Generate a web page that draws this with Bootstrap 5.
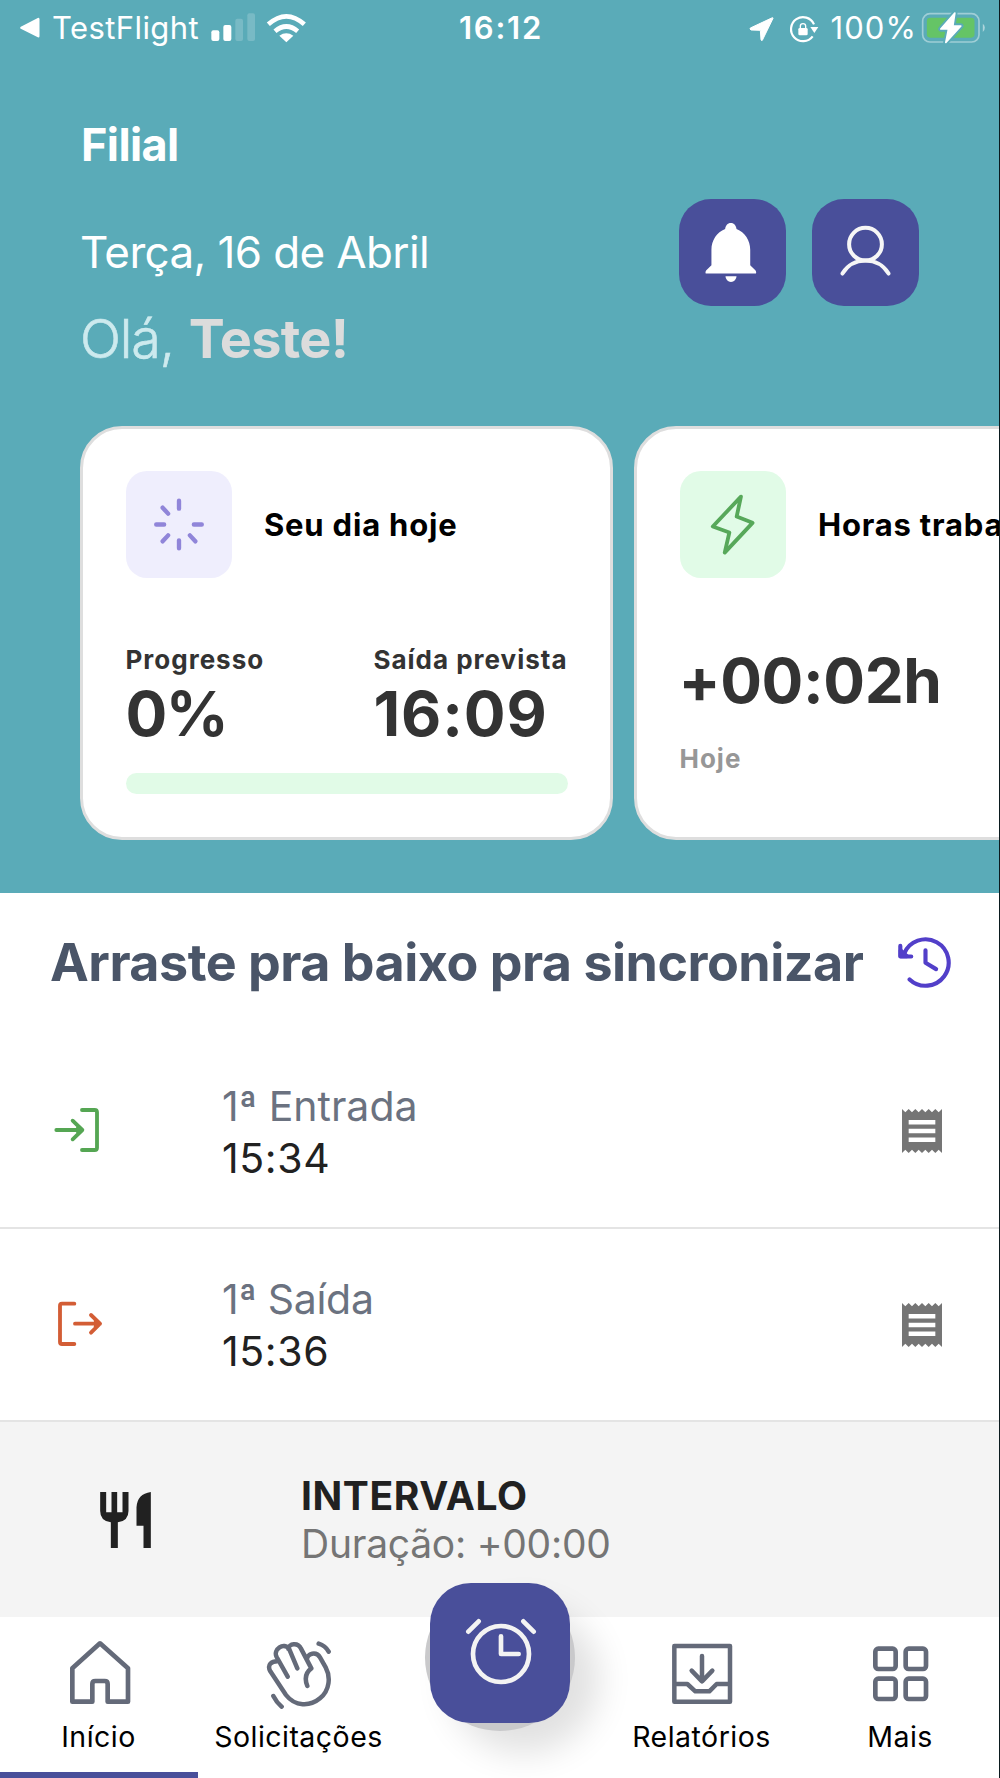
<!DOCTYPE html>
<html lang="pt-BR">
<head>
<meta charset="utf-8">
<title>Ponto</title>
<meta name="viewport" content="width=device-width, initial-scale=1">
<link href="https://cdn.jsdelivr.net/npm/bootstrap@5.3.0/dist/css/bootstrap.min.css" rel="stylesheet">
<style>
body{font-family:Inter,"Liberation Sans",sans-serif;width:1000px;height:1778px;overflow:hidden;background:#fff;color:#212121}
svg{display:block;flex:none}
.screen{width:1000px;height:1778px;border-right:1px solid #0b1a1e;overflow:hidden}
.txt{white-space:nowrap;display:block}
.hero{background:#5aabb8;height:893px;flex:none}
.statusbar{height:55px;font-size:31px;line-height:55px}
.s-side{flex:1 1 0}
.s-back{margin-left:19px}
.s-app{margin-left:11px;letter-spacing:.41px}
.s-net{margin-left:10px}
.s-time{font-weight:600;letter-spacing:1.77px;margin-left:3px}
.s-pct{margin-left:8px;letter-spacing:1.09px}
.s-bat{margin-left:3px;margin-right:12px}
.filial{font-size:45px;line-height:50px;font-weight:700;letter-spacing:-.6px;margin:65px 0 28px 81px}
.greet{padding:0 80px 0 80px;height:171px}
.date{font-size:44px;line-height:54px;margin-top:27px;letter-spacing:-.62px}
.ola{font-size:54px;line-height:60px;margin-top:30px;font-weight:300;color:#cdeaee}
.ola span{letter-spacing:-1.2px;-webkit-text-stroke:.6px #cdeaee}
.ola b{font-weight:700;color:#dcdcdc;letter-spacing:-.73px;margin-left:15px}
.actions{gap:26px}
.sqbtn{width:107px;height:107px;border-radius:32px;background:#494f9a;border:0;margin-top:.5px}
.cards{margin-top:57px;padding-left:80px;gap:21px}
.tile-card{width:533px;height:414px;flex:none;border:3px solid #dedede;border-radius:42px;padding:42px 42.5px;background:#fff;color:#333}
.tile{width:106.5px;height:107px;border-radius:21px;flex:none}
.tile-a{background:#efeefd}.tile-b{background:#e1fbe7}
.ctitle{font-size:31px;line-height:40px;font-weight:700;color:#000;margin-left:32px;letter-spacing:.8px}
.figures{margin-top:67px}
.fig-a{width:248px}
.clabel{font-size:26px;line-height:30px;font-weight:700;letter-spacing:1px}
.cval{font-size:62px;line-height:70px;font-weight:700}
.figures .cval{margin-top:4px}
.v-pct{letter-spacing:-1.6px}
.v-out{letter-spacing:.9px}
.v-worked{letter-spacing:-.4px;margin-top:68px;margin-left:-1px}
.v-when{margin-top:28px;color:#979797}
.bar{height:21px;border-radius:11px;background:#e1fbe7;margin-top:24px}
.sync{height:138px;padding:2px 47px 0 50px}
.sync .txt{font-size:52px;line-height:60px;font-weight:700;color:#4a5568;letter-spacing:-.5px}
.punch{height:198px;border-bottom:2px solid #e4e4e4;padding:4px 57px 0 54px;font-size:41px;line-height:52px}
.punch + .punch{height:193px;padding:0 57px 0 57px}
.p-ico{width:168px;padding-bottom:2px}
.punch + .punch .p-ico{width:165px}
.p-text{padding-top:1px}
.p-name{color:#6b7280}
.n-out{letter-spacing:-.3px}
.p-time{letter-spacing:.6px}
.pause{height:195px;background:#f4f4f4;padding-left:100px;font-size:39px;line-height:48px;flex:none}
.pause-text{margin-left:150px}
.pause-title{letter-spacing:.58px}
.pause-time{color:#757575;letter-spacing:-.25px}
.tabs{height:161px;background:#fff;flex:none}
.tab{width:200px;flex:none;position:relative;padding-top:20px;color:#000;font-size:28.5px}
.tab .txt{line-height:36px;margin-top:10px;letter-spacing:.48px}
.tab .t-left{margin-right:3px}
.tab .t-right{margin-left:3px}
.tab.active::after{content:"";position:absolute;left:0;bottom:0;width:198px;height:6px;background:#494f9a}
.clockwrap{position:absolute;left:25px;top:-33px;width:150px;height:147px;border-radius:50%;background:#c9c9cb;box-shadow:24px 22px 34px rgba(0,0,0,.12)}
.clockbtn{position:absolute;left:5px;top:-1px;width:140px;height:140px;border-radius:41px;background:#494f9a;border:0}
</style>
</head>
<body>
<div class="screen d-flex flex-column">
<header class="hero">
  <div class="statusbar d-flex text-white">
    <div class="s-side d-flex align-items-center">
      <svg class="s-back" width="22" height="24" viewBox="57 48 66 72"><path d="M64 83L115 57V109Z" fill="#fff" stroke="#fff" stroke-width="7" stroke-linejoin="round"/></svg>
      <span class="txt s-app">TestFlight</span>
      <svg class="s-net" width="100" height="34" viewBox="625 30 300 102"><g fill="#fff"><rect x="632" y="88" width="24" height="32" rx="6"/><rect x="668" y="72" width="24" height="48" rx="6"/><g opacity=".18"><rect x="704" y="53" width="23" height="67" rx="6"/><rect x="740" y="37" width="23" height="83" rx="6"/></g><path d="M836 104Q857 90 878 104L857 124Z"/></g><path d="M803 70Q857 22 911 70M823 91Q857 62 891 91" fill="none" stroke="#fff" stroke-width="14"/></svg>
    </div>
    <span class="txt s-time">16:12</span>
    <div class="s-side d-flex align-items-center justify-content-end">
      <svg width="75" height="35" viewBox="740 25 225 105"><path d="M818 50L786 116Q783 118 782 114L780 86L752 85Q747 82 750 79L814 49Q819 47 818 50Z" fill="#fff" stroke="#fff" stroke-width="3" stroke-linejoin="round"/><path d="M941 68A36 36 0 1 0 937 104" fill="none" stroke="#fff" stroke-width="6.500"/><path d="M930 76H954L942 94Z" fill="#fff"/><rect x="894" y="79" width="28" height="22" rx="4" fill="#fff"/><path d="M900 80V73Q900 66 908 66T916 73V80" fill="none" stroke="#fff" stroke-width="4"/></svg>
      <span class="txt s-pct">100%</span>
      <svg class="s-bat" width="67" height="35" viewBox="1258 25 200 105"><rect x="1265.500" y="36" width="169" height="85" rx="22" fill="none" stroke="#fff" stroke-opacity=".42" stroke-width="5"/><rect x="1278" y="48" width="143" height="60" rx="10" fill="#65c466"/><path d="M1446 66Q1452 70 1452 78T1446 91Z" fill="#fff" fill-opacity=".5"/><path d="M1362 34L1320 82H1343L1335 122L1380 73H1356Z" fill="#fff" stroke="#5aabb8" stroke-width="16" stroke-linejoin="round"/><path d="M1362 34L1320 82H1343L1335 122L1380 73H1356Z" fill="#fff" stroke="#fff" stroke-width="5" stroke-linejoin="round"/></svg>
    </div>
  </div>
  <div class="filial text-white"><span class="txt">Filial</span></div>
  <div class="greet d-flex justify-content-between text-white">
    <div>
      <div class="date"><span class="txt">Terça, 16 de Abril</span></div>
      <div class="ola d-flex"><span class="txt">Olá,</span><b class="txt">Teste!</b></div>
    </div>
    <div class="actions d-flex">
      <button class="sqbtn p-0" aria-label="Notificações"><svg width="107" height="107" viewBox="539 597 320 320" fill="#fff"><path d="M694 669c-10 0-16 8-17 18c-25 10-41 34-41 62V795L620 811Q617 816 619 820H769Q771 816 768 811L752 795V749c0-28-16-52-41-62c-1-10-7-18-17-18zM678 828H711a16.500 17 0 0 1-33 0z"/></svg></button>
      <button class="sqbtn p-0" aria-label="Perfil"><svg width="107" height="107" viewBox="938 597 320 320" fill="none" stroke="#f6f6f6" stroke-width="12" stroke-linecap="round"><circle cx="1098" cy="732" r="49"/><path d="M1029 820C1060 768 1136 768 1167 820"/></svg></button>
    </div>
  </div>
  <div class="cards d-flex overflow-hidden">
    <section class="tile-card">
      <div class="d-flex align-items-center">
        <div class="tile tile-a"><svg width="106" height="107" viewBox="-53.500 -53.500 107 107" stroke="#9085d9" stroke-width="4.400" stroke-linecap="round"><path d="M0-24V-16M0 16V24M-23 0H-15M15 0H23M-16.500-17L-11-11M-16.500 17L-11 11M16.500 17L11 11"/></svg></div>
        <span class="txt ctitle">Seu dia hoje</span>
      </div>
      <div class="figures d-flex">
        <div class="fig-a"><span class="txt clabel">Progresso</span><span class="txt cval v-pct">0%</span></div>
        <div><span class="txt clabel">Saída prevista</span><span class="txt cval v-out">16:09</span></div>
      </div>
      <div class="bar"></div>
    </section>
    <section class="tile-card">
      <div class="d-flex align-items-center">
        <div class="tile tile-b"><svg width="106" height="107" viewBox="239 185 320 320" fill="none" stroke="#57a85a" stroke-width="11.500" stroke-linejoin="round"><path d="M423 261L338 351L388 369L374 430L458 340L410 321Z"/></svg></div>
        <span class="txt ctitle">Horas trabalhadas</span>
      </div>
      <div class="txt cval v-worked">+00:02h</div>
      <div class="txt clabel v-when">Hoje</div>
    </section>
  </div>
</header>
<main class="flex-grow-1">
  <div class="sync d-flex align-items-center justify-content-between">
    <span class="txt">Arraste pra baixo pra sincronizar</span>
    <svg width="55" height="55" viewBox="1192 106 166 166" fill="none" stroke="#523fc9" stroke-width="12.500" stroke-linecap="round" stroke-linejoin="round"><path d="M1230 237A70 70 0 1 0 1213 160L1203 167M1202 136V168H1235"/><path d="M1203 150V167H1222Z" fill="#523fc9"/><path d="M1278 149V187L1310 206"/></svg>
  </div>
  <div class="punch d-flex align-items-center">
    <div class="p-ico"><svg width="46" height="46" viewBox="162 622 138 138" fill="none" stroke="#55a653" stroke-width="11.500" stroke-linecap="round" stroke-linejoin="round"><path d="M246 631H284Q291 631 291 638V744Q291 751 284 751H246M169 691H247M218 663L247 691L218 719M234 682L247 691L234 700"/></svg></div>
    <div class="p-text flex-grow-1"><span class="txt p-name">1ª Entrada</span><span class="txt p-time">15:34</span></div>
    <svg width="40" height="44" viewBox="3 2 18 20" preserveAspectRatio="none" fill="#757575"><path d="M18 17H6v-2h12v2zm0-4H6v-2h12v2zm0-4H6V7h12v2zM3 22l1.500-1.500L6 22l1.500-1.500L9 22l1.500-1.500L12 22l1.500-1.500L15 22l1.500-1.500L18 22l1.500-1.500L21 22V2l-1.500 1.500L18 2l-1.500 1.500L15 2l-1.500 1.500L12 2l-1.500 1.500L9 2 7.500 3.500 6 2 4.500 3.500 3 2z"/></svg>
  </div>
  <div class="punch d-flex align-items-center">
    <div class="p-ico"><svg width="46" height="46" viewBox="171 242 138 138" fill="none" stroke="#d35d35" stroke-width="11.500" stroke-linecap="round" stroke-linejoin="round"><path d="M223 250H186Q180 250 180 256V365Q180 371 186 371H223M225 310H300M273 284L300 310L273 337M287 301L300 310L287 319"/></svg></div>
    <div class="p-text flex-grow-1"><span class="txt p-name n-out">1ª Saída</span><span class="txt p-time">15:36</span></div>
    <svg width="40" height="44" viewBox="3 2 18 20" preserveAspectRatio="none" fill="#757575"><path d="M18 17H6v-2h12v2zm0-4H6v-2h12v2zm0-4H6V7h12v2zM3 22l1.500-1.500L6 22l1.500-1.500L9 22l1.500-1.500L12 22l1.500-1.500L15 22l1.500-1.500L18 22l1.500-1.500L21 22V2l-1.500 1.500L18 2l-1.500 1.500L15 2l-1.500 1.500L12 2l-1.500 1.500L9 2 7.500 3.500 6 2 4.500 3.500 3 2z"/></svg>
  </div>
  <div class="pause d-flex align-items-center">
    <svg width="51" height="56" viewBox="300 815 152 168" fill="#212121"><path d="M300 815h18v61h16v-61h17v61h16v-61h18v57q0 30-32 34v77h-21v-77q-32-4-32-34zM452 815v168h-22v-67h-21v-55q2-40 43-46z"/></svg>
    <div class="pause-text"><span class="txt fw-bold pause-title">INTERVALO</span><span class="txt pause-time">Duração: +00:00</span></div>
  </div>
</main>
<nav class="tabs d-flex">
  <div class="tab active d-flex flex-column align-items-center"><svg width="72" height="72" viewBox="192 231 216 216" fill="none" stroke="#646a79" stroke-width="14" stroke-linejoin="round"><path d="M217 325L300 250L384 325V425H323V372Q323 363 314 363H286Q277 363 277 372V425H217Z"/></svg><span class="txt t-left">Início</span></div>
  <div class="tab d-flex flex-column align-items-center"><svg width="72" height="72" viewBox="792 231 216 216" fill="none" stroke="#646a79" stroke-width="13.500" stroke-linecap="round" stroke-linejoin="round"><path d="M863 350L830 291C818 268 852 244 868 268L892 325M865 267C866 250 894 246 903 266L934 325C914 340 914 358 922 378M921 300C920 278 950 274 960 292L977 322C992 350 990 390 960 415C930 440 885 440 858 405L811 334C800 314 815 304 832 304M956 251Q976 257 986 275M820 408Q830 428 845 440"/></svg><span class="txt t-left">Solicitações</span></div>
  <div class="tab"><div class="clockwrap"><button class="clockbtn p-0" aria-label="Registrar ponto"><svg width="140" height="140" viewBox="90 69 420 420" fill="none" stroke="#f3f3f3" stroke-width="14" stroke-linecap="round" stroke-linejoin="round"><circle cx="303" cy="282" r="84"/><path d="M303 229V282H356M205 215L236 184M370 184L401 215"/></svg></button></div></div>
  <div class="tab d-flex flex-column align-items-center"><svg width="72" height="72" viewBox="192 231 216 216" fill="none" stroke="#646a79" stroke-width="13.500" stroke-linecap="round" stroke-linejoin="round"><path d="M223 258H390V425H223ZM306 288V364M275 332L306 364L337 332M223 372H262L286 394H328L350 372H390"/></svg><span class="txt t-right">Relatórios</span></div>
  <div class="tab d-flex flex-column align-items-center"><svg width="72" height="72" viewBox="792 231 216 216" fill="none" stroke="#646a79" stroke-width="14"><rect x="826" y="266" width="61" height="61" rx="9"/><rect x="917" y="266" width="61" height="61" rx="9"/><rect x="826" y="356" width="61" height="61" rx="9"/><rect x="917" y="356" width="61" height="61" rx="9"/></svg><span class="txt">Mais</span></div>
</nav>
</div>
<script src="https://cdn.jsdelivr.net/npm/bootstrap@5.3.0/dist/js/bootstrap.bundle.min.js"></script>
</body>
</html>
